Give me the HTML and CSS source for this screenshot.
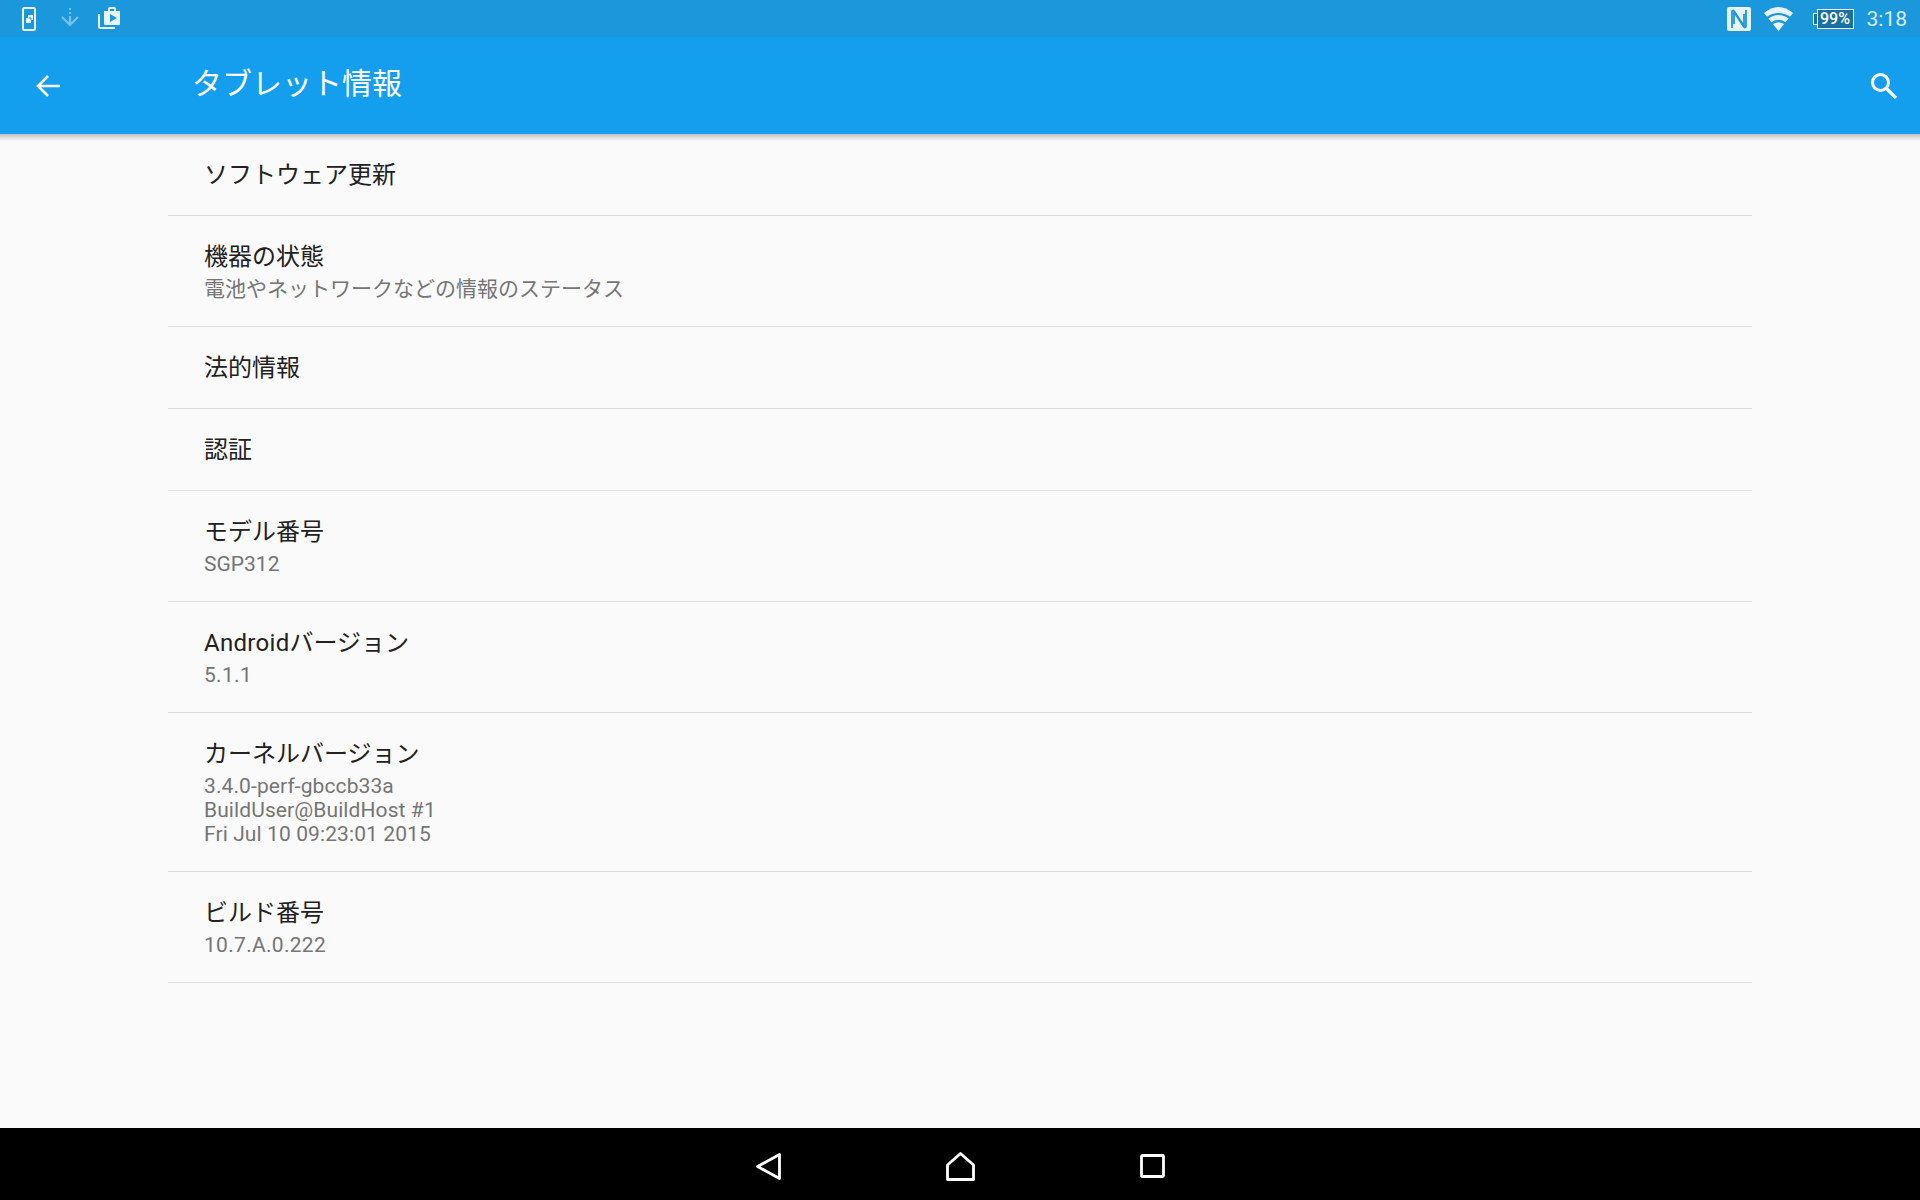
FILE: index.html
```html
<!DOCTYPE html>
<html lang="ja">
<head>
    <title>タブレット情報</title>
    <link rel="stylesheet" href="styles.css">
</head>
<body>
    <div class="status-bar">
        <div class="status-left">
            <svg class="icon phone" width="14" height="24" viewBox="0 0 14 24">
                <rect x="1" y="1" width="12" height="22" rx="1.500" fill="none" stroke="#e8f4fc" stroke-width="2"/>
                <path d="M6 8h5v5H9v3H4v-5h2z" fill="#e8f4fc"/>
                <path d="M6.500 11H9v2" fill="none" stroke="#1b97dc" stroke-width="1"/>
            </svg>
            <svg class="icon download" width="18" height="19" viewBox="0 0 18 19">
                <path d="M9 0v2M9 4v2" stroke="#e8f4fc" stroke-width="2" fill="none"/>
                <path d="M9 8v9M1 9l8 8 8-8" stroke="#e8f4fc" stroke-width="2.200" fill="none"/>
            </svg>
            <svg class="icon bag" width="22" height="22" viewBox="0 0 22 22">
                <path d="M1 7v13a1 1 0 0 0 1 1h15" fill="none" stroke="#e8f4fc" stroke-width="2"/>
                <path d="M6 4h4V2a2 2 0 0 1 2-2h4a2 2 0 0 1 2 2v2h4v13a1 1 0 0 1-1 1H7a1 1 0 0 1-1-1z M12 2v2h4V2z M12 7v8l7-4z" fill="#e8f4fc" fill-rule="evenodd"/>
            </svg>
        </div>
        <div class="status-right">
            <svg class="icon" width="24" height="24" viewBox="0 0 24 24">
                <rect width="24" height="24" rx="2" fill="#e8f4fc"/>
                <path d="M5 21V5q0-2 2-1l10 15V7M19 3v16q0 2-2 1L7 5v12" fill="none" stroke="#1b97dc" stroke-width="1.800"/>
            </svg>
            <svg class="icon wifi" width="29" height="24" viewBox="0 0 29 24">
                <path d="M14.500 24 0 6Q14.500-6 29 6z" fill="#e8f4fc"/>
                <path d="M3 11Q14.500 3 26 11M7 17Q14.500 11 22 17" fill="none" stroke="#1b97dc" stroke-width="2.200"/>
            </svg>
            <div class="battery">
                <span class="battery-tip"></span>
                <span class="battery-body">99%</span>
            </div>
            <span class="clock">3:18</span>
        </div>
    </div>

    <div class="app-bar">
        <svg class="back" width="26" height="24" viewBox="0 0 26 24">
            <path d="M25 12H3M13 2 3 12l10 10" fill="none" stroke="#fff" stroke-width="2.600"/>
        </svg>
        <h1>タブレット情報</h1>
        <svg class="search" width="26" height="26" viewBox="0 0 26 26">
            <circle cx="9.500" cy="9.500" r="8" fill="none" stroke="#fff" stroke-width="3"/>
            <path d="M15.500 15.500l9.500 9.500" stroke="#fff" stroke-width="3.200" fill="none"/>
        </svg>
    </div>

    <div class="content">
        <div class="list">
            <div class="row one-line"><div class="title">ソフトウェア更新</div></div>
            <div class="row">
                <div class="title">機器の状態</div>
                <div class="summary">電池やネットワークなどの情報のステータス</div>
            </div>
            <div class="row one-line"><div class="title">法的情報</div></div>
            <div class="row one-line"><div class="title">認証</div></div>
            <div class="row">
                <div class="title">モデル番号</div>
                <div class="summary">SGP312</div>
            </div>
            <div class="row">
                <div class="title"><span class="latin-title">Android</span>バージョン</div>
                <div class="summary version">5.1.1</div>
            </div>
            <div class="row">
                <div class="title">カーネルバージョン</div>
                <div class="summary kernel">3.4.0-perf-gbccb33a<br>BuildUser@BuildHost #1<br>Fri Jul 10 09:23:01 2015</div>
            </div>
            <div class="row">
                <div class="title">ビルド番号</div>
                <div class="summary version">10.7.A.0.222</div>
            </div>
        </div>
    </div>

    <div class="nav-bar">
        <svg class="icon" width="25" height="27" viewBox="0 0 25 27">
            <path d="M23.500 1.500v24L1.500 13.500z" fill="none" stroke="#fff" stroke-width="2.800" stroke-linejoin="round"/>
        </svg>
        <svg class="icon" width="29" height="29" viewBox="0 0 29 29">
            <path d="M1.500 27.500V13L14.500 1.500 27.500 13v14.500z" fill="none" stroke="#fff" stroke-width="2.800" stroke-linejoin="round"/>
        </svg>
        <svg class="icon" width="25" height="24" viewBox="0 0 25 24">
            <rect x="1.500" y="1.500" width="22" height="21" rx="1" fill="none" stroke="#fff" stroke-width="2.800"/>
        </svg>
    </div>
</body>
</html>
```

FILE: styles.css
```css
html, body {
    margin: 0;
    height: 100%;
}
body {
    display: flex;
    flex-direction: column;
    height: 1200px;
    overflow: hidden;
    background-color: #fafafa;
    font-family: Roboto, "Noto Sans CJK JP", sans-serif;
}
.icon {
    display: block;
}
.status-bar {
    height: 37px;
    box-sizing: border-box;
    padding-top: 1px;
    flex-shrink: 0;
    display: flex;
    justify-content: space-between;
    align-items: center;
    background-color: #1b97dc;
    color: #d9effc;
}
.status-left {
    display: flex;
    align-items: center;
    padding-left: 22px;
}
.download {
    margin: -4px 0 0 25px;
    opacity: 0.45;
}
.bag {
    margin: -2px 0 0 19px;
}
.status-right {
    display: flex;
    align-items: center;
    padding-right: 13px;
}
.wifi {
    margin-left: 13px;
}
.battery {
    display: flex;
    align-items: center;
    margin-left: 20px;
}
.battery-tip {
    width: 3px;
    height: 10px;
    border: 1px solid #fff;
    border-right: none;
    background-color: #1a6fa3;
}
.battery-body {
    width: 35px;
    height: 18px;
    border: 1px solid #fff;
    background-color: #1a6fa3;
    color: #fff;
    font-size: 16px;
    font-weight: 500;
    line-height: 18px;
    text-align: center;
}
.clock {
    margin-left: 13px;
    font-size: 21px;
}
.app-bar {
    position: relative;
    height: 97px;
    flex-shrink: 0;
    display: flex;
    align-items: center;
    background-color: #149eee;
    color: white;
}
.app-bar::after {
    content: "";
    position: absolute;
    left: 0;
    right: 0;
    top: 100%;
    height: 7px;
    background: linear-gradient(#bfbfbf, #fafafa);
}
.back {
    margin: 1px 0 0 35px;
}
.app-bar h1 {
    margin: -9px 0 0 131px;
    font-size: 30px;
    font-weight: 400;
}
.search {
    margin: 1px 23px 0 auto;
}
.content {
    flex: 1;
    padding: 0 168px;
}
.row {
    padding: 25px 36px 25px;
    border-bottom: 1px solid #dcdcdc;
}
.row.one-line {
    padding-bottom: 24px;
}
.title {
    font-size: 24px;
    line-height: 32px;
    color: #212121;
}
.latin-title {
    letter-spacing: 0.3px;
}
.summary {
    margin-top: 4px;
    font-size: 21px;
    line-height: 24px;
    color: #757575;
}
.version {
    letter-spacing: 0.3px;
}
.kernel {
    letter-spacing: 0.1px;
}
.nav-bar {
    height: 72px;
    box-sizing: border-box;
    padding-top: 4px;
    flex-shrink: 0;
    display: flex;
    justify-content: center;
    align-items: center;
    gap: 165px;
    background-color: black;
}
```
